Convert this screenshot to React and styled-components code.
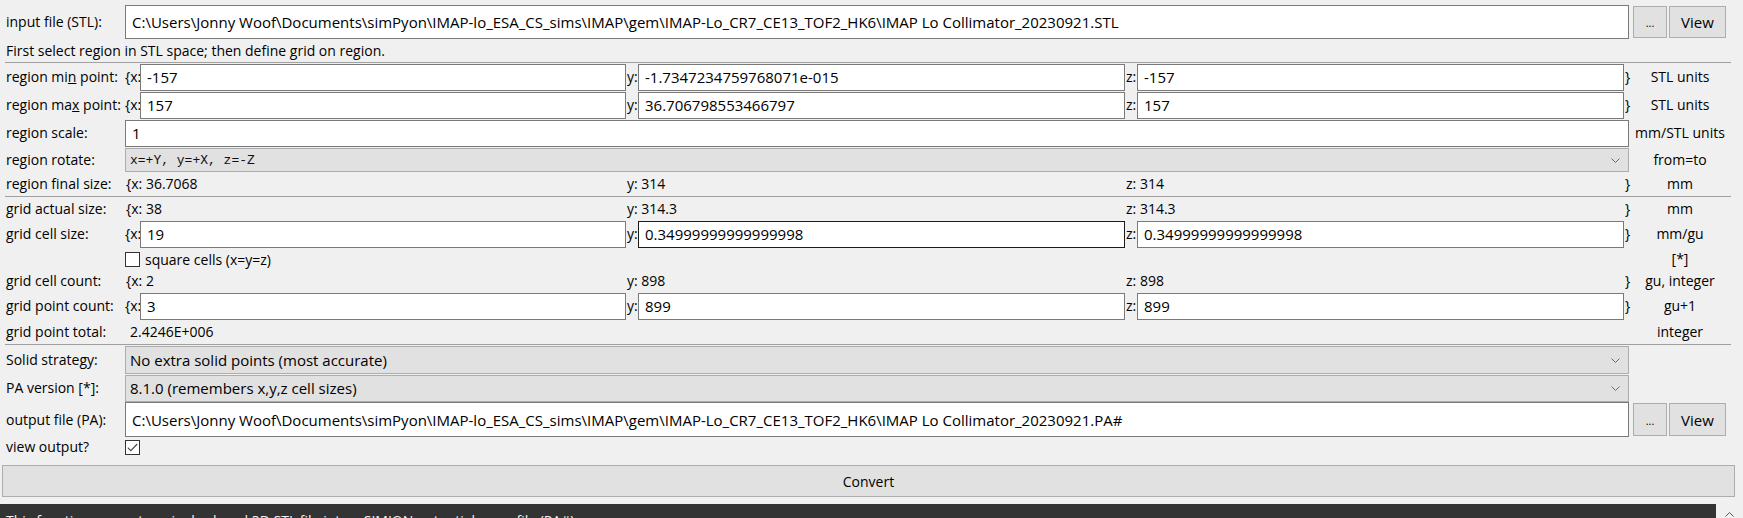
import React from 'react';
import styled, { createGlobalStyle } from 'styled-components';

const GlobalStyle = createGlobalStyle`
  html, body {
    margin: 0;
    padding: 0;
    background: #f0f0f0;
  }
  body {
    font-family: "Segoe UI", "Open Sans", "Noto Sans", sans-serif;
    font-size: 14px;
    color: #000;
  }
`;

// Column widths of the x / y / z field group
const XYZ_COLS = '15px 486px 12px 487px 12px 487px 5px';

const Window = styled.div`
  width: 1743px;
  height: 518px;
  overflow: hidden;
  background: #f0f0f0;
  display: flex;
  flex-direction: column;
`;

const Form = styled.div`
  display: flex;
  flex-direction: column;
  padding: 5px 12px 0 5px;
`;

const Row = styled.div`
  display: grid;
  grid-template-columns: 120px 1504px 102px;
  align-items: ${p => p.$align || 'center'};
  height: ${p => p.$h}px;
  white-space: nowrap;
`;

const Label = styled.div`
  padding-left: 1px;
  line-height: 1;
  align-self: center;
`;

const Unit = styled.div`
  text-align: center;
  line-height: 1;
  align-self: center;
`;

const Note = styled.div`
  height: 23px;
  display: flex;
  align-items: center;
  padding-left: 1px;
`;

const Separator = styled.div`
  height: 1px;
  background: #a0a0a0;
  margin-top: ${p => p.$mt || 0}px;
`;

const Xyz = styled.div`
  display: grid;
  grid-template-columns: ${XYZ_COLS};
  align-items: center;
  height: 100%;
`;

const Axis = styled.span`
  line-height: 1;
  padding-left: ${p => p.$pad || 0}px;
`;

const Value = styled.span`
  grid-column: ${p => p.$col || 'auto'};
  line-height: 1;
  padding-left: ${p => p.$pad || 1}px;
`;

const TextBox = styled.div`
  box-sizing: border-box;
  height: ${p => p.$h || 27}px;
  background: #fff;
  border: 1px solid ${p => (p.$focus ? '#1b1b1b' : '#7a7a7a')};
  padding-left: 6px;
  display: flex;
  align-items: center;
  font-size: 15px;
  overflow: hidden;
`;

const Select = styled.div`
  box-sizing: border-box;
  height: ${p => p.$h || 27}px;
  background: #e1e1e1;
  border: 1px solid #adadad;
  padding: 0 8px 0 4px;
  display: flex;
  align-items: center;
  justify-content: space-between;
  font-family: ${p => (p.$mono ? '"Liberation Mono", "Courier New", monospace' : 'inherit')};
  font-size: ${p => (p.$mono ? '13px' : '15px')};
  color: ${p => (p.$mono ? '#111' : '#000')};
`;

const ButtonGroup = styled.div`
  display: flex;
  gap: 2px;
  padding-left: 4px;
  height: ${p => p.$h}px;
`;

const Button = styled.div`
  box-sizing: border-box;
  width: ${p => p.$w}px;
  height: 100%;
  background: #e1e1e1;
  border: 1px solid #adadad;
  display: flex;
  align-items: ${p => (p.$dots ? 'flex-end' : 'center')};
  justify-content: center;
  padding-bottom: ${p => (p.$dots ? 7 : 0)}px;
  font-size: ${p => (p.$dots ? 11 : 15)}px;
`;

const CheckLine = styled.div`
  display: flex;
  align-items: center;
  gap: 5px;
`;

const CheckBox = styled.div`
  box-sizing: border-box;
  width: 15px;
  height: 15px;
  background: #fff;
  border: 1px solid #333;
  display: flex;
  align-items: center;
  justify-content: center;
`;

const ConvertWrap = styled.div`
  padding: 8px 8px 0 2px;
`;

const ConvertButton = styled.div`
  box-sizing: border-box;
  height: 32px;
  background: #e1e1e1;
  border: 1px solid #adadad;
  display: flex;
  align-items: center;
  justify-content: center;
  font-size: 14px;
`;

const Bottom = styled.div`
  display: flex;
  margin-top: 7px;
  height: 14px;
`;

const Console = styled.div`
  flex: 1;
  background: #333333;
  color: #f2f2f2;
  font-size: 14px;
  padding: 7px 0 0 6px;
  overflow: hidden;
  white-space: nowrap;
`;

const Scrollbar = styled.div`
  width: 27px;
  background: #f0f0f0;
  display: flex;
  justify-content: center;
  padding-top: 8px;
`;

const Chevron = ({ up }) => (
  <svg width="9" height="5" viewBox="0 0 9 5">
    <path
      d={up ? 'M0.5 4.5 L4.5 0.5 L8.5 4.5' : 'M0.5 0.5 L4.5 4.5 L8.5 0.5'}
      fill="none"
      stroke={up ? '#555' : '#6d6d6d'}
      strokeWidth="1"
    />
  </svg>
);

const Check = () => (
  <svg width="11" height="9" viewBox="0 0 11 9">
    <path d="M0.8 4.6 L3.8 7.6 L10.2 1" fill="none" stroke="#444" strokeWidth="1.1" />
  </svg>
);

const XyzInputs = ({ values, focus }) => (
  <Xyz>
    <Axis>{'{x:'}</Axis>
    <TextBox>{values[0]}</TextBox>
    <Axis $pad={1}>y:</Axis>
    <TextBox $focus={focus === 1}>{values[1]}</TextBox>
    <Axis $pad={1}>z:</Axis>
    <TextBox>{values[2]}</TextBox>
    <Axis $pad={1}>{'}'}</Axis>
  </Xyz>
);

const XyzText = ({ values }) => (
  <Xyz>
    <Value $col="1 / 3">{'{x: ' + values[0]}</Value>
    <Value $col="3 / 5">{'y: ' + values[1]}</Value>
    <Value $col="5 / 7">{'z: ' + values[2]}</Value>
    <Axis $pad={1}>{'}'}</Axis>
  </Xyz>
);

const inputPath =
  'C:\\Users\\Jonny Woof\\Documents\\simPyon\\IMAP-lo_ESA_CS_sims\\IMAP\\gem\\IMAP-Lo_CR7_CE13_TOF2_HK6\\IMAP Lo Collimator_20230921.STL';
const outputPath =
  'C:\\Users\\Jonny Woof\\Documents\\simPyon\\IMAP-lo_ESA_CS_sims\\IMAP\\gem\\IMAP-Lo_CR7_CE13_TOF2_HK6\\IMAP Lo Collimator_20230921.PA#';

const App = () => (
  <Window>
    <GlobalStyle />
    <Form>
      <Row $h={34}>
        <Label>input file (STL):</Label>
        <TextBox $h={34}>{inputPath}</TextBox>
        <ButtonGroup $h={32}>
          <Button $w={34} $dots>...</Button>
          <Button $w={57}>View</Button>
        </ButtonGroup>
      </Row>
      <Note>First select region in STL space; then define grid on region.</Note>
      <Separator />

      <Row $h={28}>
        <Label>region mi<u>n</u> point:</Label>
        <XyzInputs values={['-157', '-1.7347234759768071e-015', '-157']} />
        <Unit>STL units</Unit>
      </Row>
      <Row $h={28}>
        <Label>region ma<u>x</u> point:</Label>
        <XyzInputs values={['157', '36.706798553466797', '157']} />
        <Unit>STL units</Unit>
      </Row>
      <Row $h={28}>
        <Label>region scale:</Label>
        <TextBox>1</TextBox>
        <Unit>mm/STL units</Unit>
      </Row>
      <Row $h={25} $align="end">
        <Label>region rotate:</Label>
        <Select $h={24} $mono>
          <span>x=+Y, y=+X, z=-Z</span>
          <Chevron />
        </Select>
        <Unit>from=to</Unit>
      </Row>
      <Row $h={23}>
        <Label>region final size:</Label>
        <XyzText values={['36.7068', '314', '314']} />
        <Unit>mm</Unit>
      </Row>
      <Separator $mt={1} />

      <Row $h={23}>
        <Label>grid actual size:</Label>
        <XyzText values={['38', '314.3', '314.3']} />
        <Unit>mm</Unit>
      </Row>
      <Row $h={28}>
        <Label>grid cell size:</Label>
        <XyzInputs values={['19', '0.34999999999999998', '0.34999999999999998']} focus={1} />
        <Unit>mm/gu</Unit>
      </Row>
      <Row $h={22}>
        <span />
        <CheckLine>
          <CheckBox />
          <span>square cells (x=y=z)</span>
        </CheckLine>
        <Unit>[*]</Unit>
      </Row>
      <Row $h={22}>
        <Label>grid cell count:</Label>
        <XyzText values={['2', '898', '898']} />
        <Unit>gu, integer</Unit>
      </Row>
      <Row $h={28}>
        <Label>grid point count:</Label>
        <XyzInputs values={['3', '899', '899']} />
        <Unit>gu+1</Unit>
      </Row>
      <Row $h={23}>
        <Label>grid point total:</Label>
        <Value $pad={5}>2.4246E+006</Value>
        <Unit>integer</Unit>
      </Row>
      <Separator $mt={1} />

      <Row $h={29} $align="end">
        <Label>Solid strategy:</Label>
        <Select $h={28}>
          <span>No extra solid points (most accurate)</span>
          <Chevron />
        </Select>
        <span />
      </Row>
      <Row $h={28}>
        <Label>PA version [*]:</Label>
        <Select $h={27}>
          <span>8.1.0 (remembers x,y,z cell sizes)</span>
          <Chevron />
        </Select>
        <span />
      </Row>
      <Row $h={35}>
        <Label>output file (PA):</Label>
        <TextBox $h={35}>{outputPath}</TextBox>
        <ButtonGroup $h={33}>
          <Button $w={34} $dots>...</Button>
          <Button $w={57}>View</Button>
        </ButtonGroup>
      </Row>
      <Row $h={20}>
        <Label>view output?</Label>
        <CheckLine>
          <CheckBox>
            <Check />
          </CheckBox>
        </CheckLine>
        <span />
      </Row>
    </Form>

    <ConvertWrap>
      <ConvertButton>Convert</ConvertButton>
    </ConvertWrap>

    <Bottom>
      <Console>
        This function converts a single closed 3D STL file into a SIMION potential array file (PA#).
      </Console>
      <Scrollbar>
        <Chevron up />
      </Scrollbar>
    </Bottom>
  </Window>
);

export default App;
